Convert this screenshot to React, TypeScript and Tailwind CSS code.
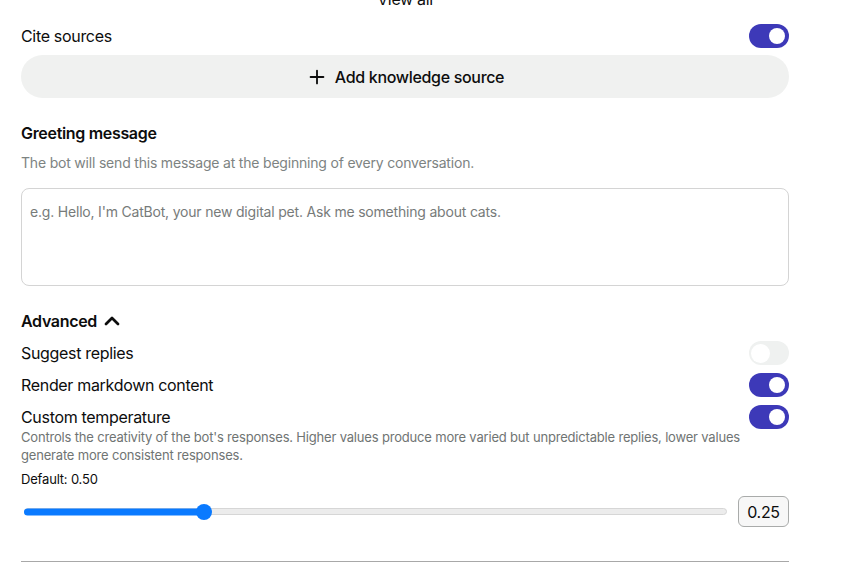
import React from "react";
import { ChevronUp, Plus } from "lucide-react";

function Toggle({ on }: { on: boolean }) {
  return (
    <div
      className={
        on
          ? "flex h-6 w-10 shrink-0 items-center justify-end rounded-full bg-[#3d39b8] px-1"
          : "flex h-6 w-10 shrink-0 items-center justify-start rounded-full bg-[#eff1f0] px-[2px]"
      }
    >
      <div className={on ? "h-4 w-4 rounded-full bg-white" : "h-[19px] w-[19px] rounded-full bg-white"} />
    </div>
  );
}

function Row({ label, on }: { label: string; on: boolean }) {
  return (
    <div className="flex h-6 items-center justify-between">
      <span className="text-[16px] leading-6 tracking-[-0.02em] text-[#0d0d0d]">{label}</span>
      <Toggle on={on} />
    </div>
  );
}

export default function App() {
  const value = 0.25;
  return (
    <div className="h-[582px] w-[844px] overflow-hidden bg-white font-['Inter',sans-serif] text-[#0d0d0d]">
      <div className="ml-[21px] flex w-[768px] flex-col">
        <div className="mt-[-13px] text-center text-[16px] leading-6 tracking-[-0.02em]">View all</div>
        <div className="mt-[13px]">
          <Row label="Cite sources" on={true} />
        </div>
        <button className="mt-[7px] flex h-[43px] w-full items-center justify-center gap-[7px] rounded-full bg-[#f0f1f0] text-[16px] font-medium tracking-[-0.02em]">
          <Plus size={22} strokeWidth={2} />
          <span>Add knowledge source</span>
        </button>
        <div className="mt-[23px] text-[16px] font-semibold leading-6 tracking-[-0.02em]">Greeting message</div>
        <div className="mt-[8px] text-[14px] leading-5 tracking-[-0.014em] text-[#7d8382]">
          The bot will send this message at the beginning of every conversation.
        </div>
        <div className="mt-[15px] h-[98px] w-full rounded-lg border border-[#d4d4d4] px-2 py-[13px]">
          <div className="text-[14px] leading-5 tracking-[-0.014em] text-[#777b7a]">
            e.g. Hello, I'm CatBot, your new digital pet. Ask me something about cats.
          </div>
        </div>
        <div className="mt-[23px] flex h-6 items-center gap-[3px]">
          <span className="text-[16px] font-semibold leading-6 tracking-[-0.02em]">Advanced</span>
          <ChevronUp size={24} strokeWidth={2.75} />
        </div>
        <div className="mt-2 flex flex-col gap-2">
          <Row label="Suggest replies" on={false} />
          <Row label="Render markdown content" on={true} />
          <Row label="Custom temperature" on={true} />
        </div>
        <div className="mt-[-1px] pr-[40px] text-[13px] leading-[18px] tracking-[-0.014em] text-[#6f7473]">
          Controls the creativity of the bot's responses. Higher values produce more varied but unpredictable replies, lower values generate more consistent responses.
        </div>
        <div className="mt-[6px] text-[13px] leading-[18px] tracking-[-0.014em] text-[#0d0d0d]">Default: 0.50</div>
        <div className="mt-[8px] flex h-[31px] items-center gap-[11px]">
          <div className="relative ml-[3px] flex h-[16px] flex-1 items-center">
            <div className="h-[7px] w-full rounded-full border border-[#d6d6d6] bg-[#ececec]" />
            <div
              className="absolute left-0 top-1/2 h-[7px] -translate-y-1/2 rounded-full bg-[#0a7aff]"
              style={{ width: `calc(${value * 100}% + 1px)` }}
            />
            <div
              className="absolute top-1/2 h-[16px] w-[16px] -translate-x-1/2 -translate-y-1/2 rounded-full bg-[#0a7aff]"
              style={{ left: `calc(8px + ${value} * (100% - 16px))` }}
            />
          </div>
          <div className="flex h-[31px] w-[51px] items-center justify-center rounded-md border border-[#a9abaa] bg-[#f7f7f7] text-[16px] tracking-[-0.02em]">
            0.25
          </div>
        </div>
        <div className="mt-[34px] h-px w-full bg-[#a8a8a8]" />
      </div>
    </div>
  );
}
